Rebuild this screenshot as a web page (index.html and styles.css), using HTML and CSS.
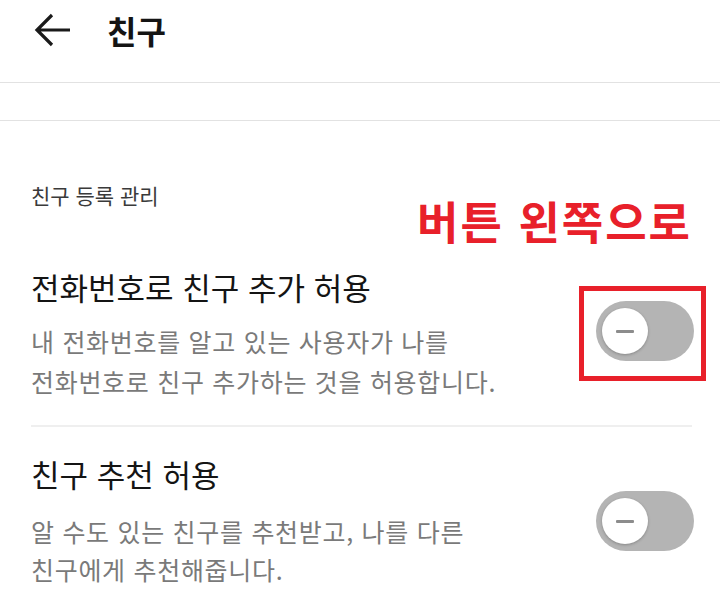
FILE: index.html
```html
<!DOCTYPE html>
<html lang="ko">
<head>
<meta charset="utf-8">
<title>친구</title>
<link rel="stylesheet" href="styles.css">
</head>
<body>
<header class="header">
  <svg class="back" width="38" height="36" viewBox="0 0 38 36" aria-hidden="true">
    <path d="M36 18 H3 M18 3 L3 18 L18 33" fill="none" stroke="#1a1a1a" stroke-width="3.2" stroke-linecap="butt" stroke-linejoin="miter"/>
  </svg>
  <h1 class="title">친구</h1>
</header>
<div class="band"></div>
<main class="content">
  <div class="section-label">친구 등록 관리</div>
  <div class="item first">
    <div class="annotation">버튼 왼쪽으로</div>
    <div class="item-text">
      <div class="item-title">전화번호로 친구 추가 허용</div>
      <div class="item-desc">내 전화번호를 알고 있는 사용자가 나를<br>전화번호로 친구 추가하는 것을 허용합니다.</div>
    </div>
    <div class="toggle-wrap raised">
      <div class="toggle"><span class="knob"><span class="minus"></span></span></div>
      <div class="highlight"></div>
    </div>
  </div>
  <div class="divider"></div>
  <div class="item">
    <div class="item-text">
      <div class="item-title">친구 추천 허용</div>
      <div class="item-desc second">알 수도 있는 친구를 추천받고, 나를 다른<br>친구에게 추천해줍니다.</div>
    </div>
    <div class="toggle-wrap">
      <div class="toggle"><span class="knob"><span class="minus"></span></span></div>
    </div>
  </div>
</main>
</body>
</html>
```

FILE: styles.css
```css
html, body {
  margin: 0;
  padding: 0;
  background: #ffffff;
}
body {
  width: 720px;
  height: 599px;
  overflow: hidden;
  font-family: "Noto Sans CJK KR", "Noto Sans", sans-serif;
  color: #111;
}
.header {
  height: 82px;
  display: flex;
  align-items: center;
  padding-left: 34px;
  border-bottom: 1px solid #e2e2e2;
  box-sizing: content-box;
}
.back {
  display: block;
  margin-top: -22px;
}
.title {
  margin: -22px 0 0 35px;
  font-size: 32px;
  font-weight: 700;
  line-height: 40px;
  color: #141414;
}
.band {
  height: 37px;
  border-bottom: 1px solid #e2e2e2;
}
.content {
  padding: 0 28px 0 31px;
}
.section-label {
  margin-top: 60px;
  font-size: 21px;
  line-height: 28px;
  color: #3a3a3a;
}
.item {
  position: relative;
  display: flex;
  align-items: center;
  justify-content: space-between;
}
.item.first {
  margin-top: 58px;
}
.item-title {
  font-size: 31px;
  line-height: 40px;
  color: #141414;
}
.item-desc {
  margin-top: 14px;
  font-size: 25px;
  line-height: 40px;
  letter-spacing: 0.7px;
  color: #7a7a7a;
}
.item-desc.second {
  margin-top: 18px;
  line-height: 38px;
}
.toggle-wrap {
  position: relative;
  margin-right: -2px;
}
.toggle-wrap.raised {
  margin-top: -6px;
}
.toggle {
  width: 98px;
  height: 60px;
  border-radius: 30px;
  background: #b4b4b4;
  display: flex;
  align-items: center;
  padding-left: 6px;
  box-sizing: border-box;
}
.knob {
  width: 46px;
  height: 46px;
  border-radius: 50%;
  background: #ffffff;
  box-shadow: 0 1px 3px rgba(0,0,0,0.25);
  display: flex;
  align-items: center;
  justify-content: center;
}
.minus {
  width: 18px;
  height: 3px;
  background: #8c8c8c;
  border-radius: 1px;
}
.highlight {
  position: absolute;
  left: -17px;
  top: -15px;
  width: 117px;
  height: 85px;
  border: 5px solid #e8202a;
}
.annotation {
  position: absolute;
  right: 0px;
  top: -71px;
  font-size: 45px;
  font-weight: 700;
  line-height: 50px;
  color: #e8202a;
  letter-spacing: 2px;
}
.divider {
  height: 2px;
  background: #efefef;
  margin: 24px 0 27px;
}
```
